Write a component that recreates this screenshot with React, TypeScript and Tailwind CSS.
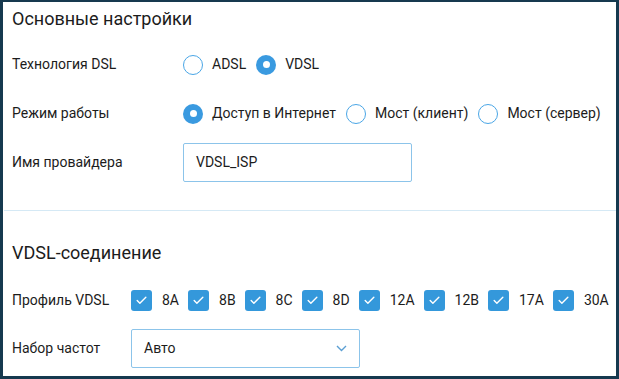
import { Check } from 'lucide-react';

const font = { fontFamily: 'Roboto, "Noto Sans", sans-serif' };

function Radio({ checked, label }: { checked?: boolean; label: string }) {
  return (
    <label className="flex items-center mr-[10px] shrink-0 whitespace-nowrap">
      {checked ? (
        <span className="w-[20px] h-[20px] rounded-full bg-[#3a9ae0] flex items-center justify-center">
          <span className="w-[7px] h-[7px] rounded-full bg-white" />
        </span>
      ) : (
        <span className="w-[20px] h-[20px] rounded-full border-[1.5px] border-[#4aa6e6] bg-white" />
      )}
      <span className="ml-[9px]">{label}</span>
    </label>
  );
}

function Box({ label }: { label: string }) {
  return (
    <label className="flex items-center mr-[9px] shrink-0 whitespace-nowrap">
      <span className="w-[21px] h-[21px] rounded-[3px] bg-[#3498db] flex items-center justify-center">
        <Check className="w-[13px] h-[13px] text-white" strokeWidth={2.6} />
      </span>
      <span className="ml-[10px]">{label}</span>
    </label>
  );
}

function Row({ label, labelW, h = 'h-[49px]', children }: { label: string; labelW: string; h?: string; children: React.ReactNode }) {
  return (
    <div className={`flex items-center ${h}`}>
      <div className={`${labelW} shrink-0 whitespace-nowrap`}>{label}</div>
      <div className="flex items-center shrink-0">{children}</div>
    </div>
  );
}

export default function App() {
  return (
    <div className="w-[619px] h-[379px] bg-[#16394f] pl-[3px] pt-[2px] pr-[3px] pb-[3px] text-[14px] text-[#1c1c1c]" style={font}>
      <div className="bg-white w-full h-full overflow-hidden">
        <div className="px-[9px]">
          <div className="h-[32px] flex items-center text-[18px]">Основные настройки</div>
          <div className="mt-[6px]">
            <Row label="Технология DSL" labelW="w-[171px]">
              <Radio label="ADSL" />
              <Radio checked label="VDSL" />
            </Row>
            <Row label="Режим работы" labelW="w-[171px]">
              <Radio checked label="Доступ в Интернет" />
              <Radio label="Мост (клиент)" />
              <Radio label="Мост (сервер)" />
            </Row>
            <Row label="Имя провайдера" labelW="w-[171px]">
              <div className="w-[229px] h-[39px] border border-[#8cc4ea] rounded-[2px] flex items-center pl-[12px]">VDSL_ISP</div>
            </Row>
          </div>
        </div>
        <div className="mt-[23px] ml-[1px] border-t border-[#d5e9f5]" />
        <div className="px-[9px]">
          <div className="mt-[25px] h-[32px] flex items-center text-[18px]">VDSL-соединение</div>
          <div className="mt-[8px]">
            <Row label="Профиль VDSL" labelW="w-[119px]" h="h-[48px]">
              {['8A', '8B', '8C', '8D', '12A', '12B', '17A', '30A'].map((p) => (
                <Box key={p} label={p} />
              ))}
            </Row>
            <Row label="Набор частот" labelW="w-[119px]">
              <div className="w-[229px] h-[39px] border border-[#8cc4ea] rounded-[2px] flex items-center justify-between pl-[12px] pr-[12px]">
                <span>Авто</span>
                <svg width="11" height="7" viewBox="0 0 11 7" fill="none">
                  <path d="M1 1l4.5 4.5L10 1" stroke="#5b9fd3" strokeWidth="1.4" />
                </svg>
              </div>
            </Row>
          </div>
        </div>
      </div>
    </div>
  );
}
